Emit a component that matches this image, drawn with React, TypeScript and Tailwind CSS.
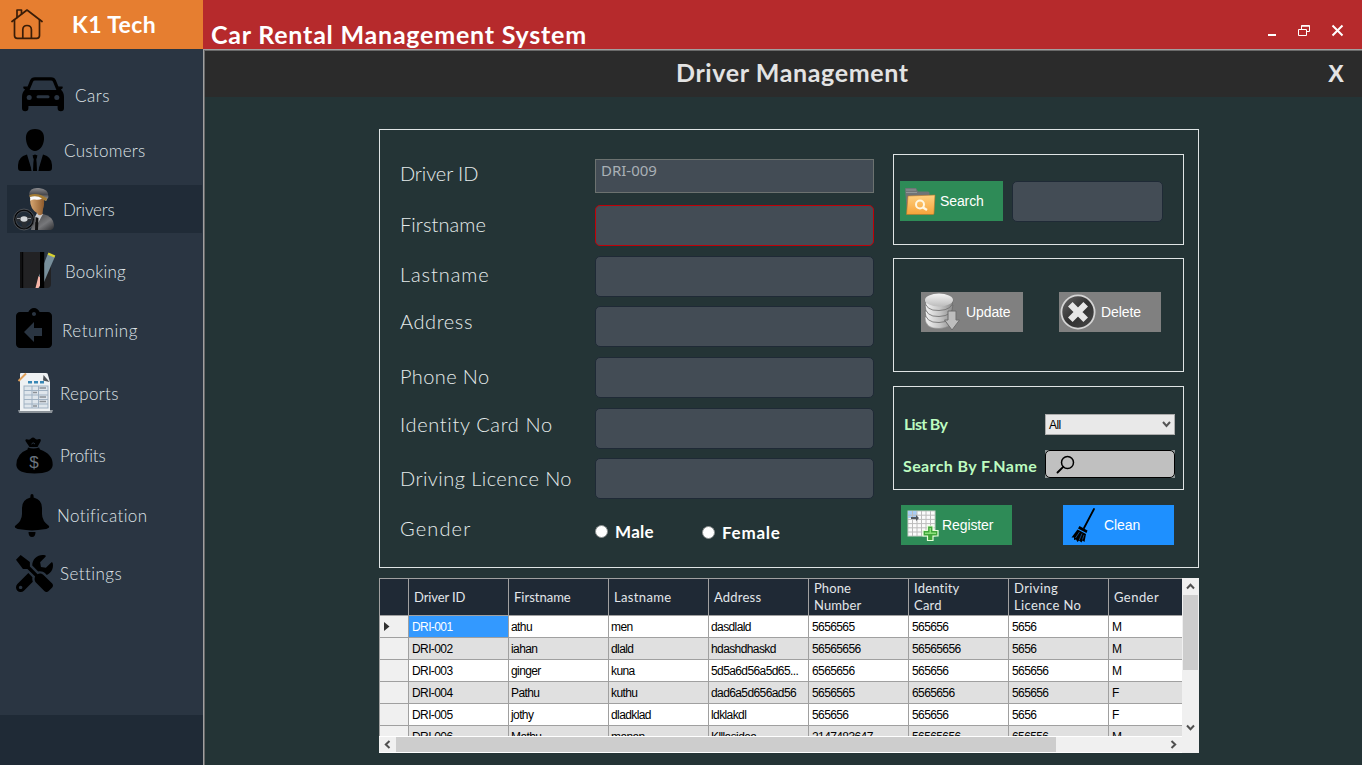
import type { ReactNode } from "react";
import { FaTools } from "react-icons/fa";
import { MdAssignmentReturn } from "react-icons/md";

function HomeIcon() {
  return (
    <svg width="34" height="32" viewBox="0 0 34 32" fill="none" stroke="#3a1d08" strokeWidth="1.7" strokeLinecap="round" strokeLinejoin="round">
      <path d="M2 12.500 L17 1 L32 12.500" />
      <path d="M4.500 10.800 V26.500 Q4.500 29.300 7.300 29.300 H26.700 Q29.500 29.300 29.500 26.500 V10.800" />
      <path d="M12.800 29 V20.500 Q13 16.500 17 16.500 Q21.200 16.500 21.400 20.500 V29" />
      <path d="M7 8.500 V1 H11.500 V5" />
    </svg>
  );
}

function CarIcon() {
  return (
    <svg width="42" height="35" viewBox="0 0 42 35">
      <path d="M5.5 14 L9.5 4.2 Q10.3 1.8 13 1.8 H29 Q31.7 1.8 32.5 4.2 L36.5 14" fill="none" stroke="#000" strokeWidth="3.2" />
      <path d="M1.5 9.5 H6 L5 13 H37 L36 9.5 H40.5 Q41.5 11.5 38.8 12.6 Q42 15.5 42 20 V31 A3.2 3.2 0 0 1 35.6 31 V29 H6.4 V31 A3.2 3.2 0 0 1 0 31 V20 Q0 15.5 3.2 12.6 Q.5 11.5 1.5 9.5 Z" />
      <circle cx="7.2" cy="20.5" r="2.5" fill="#2a3542" />
      <circle cx="34.8" cy="20.5" r="2.5" fill="#2a3542" />
      <rect x="14.5" y="18.3" width="13" height="3" rx="1.5" fill="#2a3542" />
    </svg>
  );
}

function CustomerIcon() {
  return (
    <svg width="34" height="42" viewBox="0 0 34 42">
      <path d="M17 0 C24 0 26.500 4.500 26 10.500 C25.500 17 21.500 22 17 22 C12.500 22 8.500 17 8 10.500 C7.500 4.500 10 0 17 0 Z" />
      <path d="M9 25.500 Q0 28 0 36 V39 Q0 42 3 42 H31 Q34 42 34 39 V36 Q34 28 25 25.500 L20 42 L18.500 30 L19.500 26.500 L17 25.500 L14.500 26.500 L15.500 30 L14 42 Z" />
      <path d="M11.300 25.500 L13.600 42 H15 L15.500 30.500 L13.800 25.500 Z M22.700 25.500 L20.400 42 H19 L18.500 30.500 L20.200 25.500 Z" fill="#2a3542" />
    </svg>
  );
}

function DriverIcon() {
  return (
    <svg width="42" height="44" viewBox="0 0 42 44">
      <defs>
        <linearGradient id="coat" x1="0" y1="0" x2="1" y2="1">
          <stop offset="0" stopColor="#3a3a3c" />
          <stop offset=".6" stopColor="#77787b" />
          <stop offset="1" stopColor="#2c2d30" />
        </linearGradient>
        <linearGradient id="cap" x1="0" y1="0" x2="0" y2="1">
          <stop offset="0" stopColor="#8b8b8e" />
          <stop offset=".5" stopColor="#4a4a4e" />
          <stop offset="1" stopColor="#b5b5b5" />
        </linearGradient>
        <linearGradient id="face" x1="0" y1="0" x2="1" y2="0">
          <stop offset="0" stopColor="#d9a873" />
          <stop offset="1" stopColor="#8d5a2c" />
        </linearGradient>
      </defs>
      <path d="M18 43 L20 32 Q23 28 30 27 Q40 29 41 38 Q41 42 38 43 Z" fill="url(#coat)" />
      <path d="M22 30 L24 26 L30 27 L25 36 L22 35 Z" fill="#c9cacd" />
      <path d="M22.500 30 L25.500 31 L25 43 H22 Z" fill="#111" />
      <path d="M17 12 H31 Q31.500 19 30 22 L29.500 27 Q26 30 24 26 Q17 22 17 12 Z" fill="url(#face)" />
      <path d="M16 7 Q17 0 26 1 Q36 2 35.500 10 L33 14 Q24 8 17 11 Z" fill="url(#cap)" />
      <path d="M16.500 8 Q25 5 34 11.500 L33 14 Q24 8.500 16.700 10 Z" fill="#a37b34" />
      <path d="M17 10 Q24 8 29 11.500 Q26 13.500 22 12.500 Q18 12 17.500 14 Z" fill="#fafafa" />
      <circle cx="11" cy="32.500" r="9.400" fill="none" stroke="#08090b" strokeWidth="2.400" />
      <circle cx="11" cy="32.500" r="10.400" fill="none" stroke="#777b80" strokeWidth=".6" />
      <circle cx="11" cy="32.500" r="8.200" fill="none" stroke="#6a6f75" strokeWidth=".5" />
      <path d="M2.500 30.500 L10 29.500 H19.500 V33 L14 36 L13 41.500 H9.500 L8.500 36 L2.500 33.500 Z" fill="#2a2e33" />
      <ellipse cx="11" cy="32" rx="3.600" ry="2.800" fill="#d3d6d9" />
      <path d="M4 31.500 H7 M15 31.500 H18" stroke="#8b8f94" strokeWidth="1.200" />
    </svg>
  );
}

function BookingIcon() {
  return (
    <svg width="36" height="37" viewBox="0 0 36 37">
      <path d="M0 0 H31 V32 Q31 36 27 36 H0 Z" fill="#222224" />
      <path d="M0 0 H3 V36 H0 Z" fill="#101011" />
      <path d="M2.300 0 H3.200 V36 H2.300 Z" fill="#000" />
      <path d="M24 0 H31 V6 L24 20 Z" fill="#2a3542" />
      <path d="M28 1.500 L35 4.500 L24 30 L19 24 Z" fill="#78909c" />
      <path d="M28.500 .5 L35.300 3.500 L34.300 5.500 L27.700 2.700 Z" fill="#d8d22f" />
      <path d="M18.500 24 L23.500 28 L18.500 36 H15.500 Z" fill="#f6b5a8" />
      <rect x="20" y="0" width="4.200" height="36" fill="#000" />
    </svg>
  );
}

function ReportIcon() {
  return (
    <svg width="37" height="42" viewBox="0 0 37 42">
      <path d="M1 38 H36 L35 41 H2 Z" fill="#8b9298" />
      <path d="M3 2 Q3 1 4 1 H29 Q31 1 31 3 L33 10 V39 H3 Z" fill="#eef1f3" />
      <path d="M26.500 3 L26 8.500 L32.500 10 Z" fill="#4d5257" />
      <path d="M1.500 9 L9 1.500" stroke="#e0a05a" strokeWidth="2" />
      <path d="M11 9 h4 v2.500 h-4z M17 9 h4 v2.500 h-4z M23 9 h4 v2.500 h-4z" fill="#3787b5" />
      <rect x="7" y="14" width="24" height="22" fill="#dfe6ec" stroke="#9fb1c2" strokeWidth="1" />
      <path d="M7 18.500 H31 M7 23 H31 M7 27.500 H31 M7 32 H31 M15 14 V36 M21.500 14 V36" stroke="#9fb1c2" strokeWidth="1" />
      <path d="M22.500 16 H29 M16 20.500 H20 M22.500 25 H29 M22.500 29.500 H29 M16 34 H20" stroke="#8c9196" strokeWidth="1.500" />
    </svg>
  );
}

function MoneyBagIcon() {
  return (
    <svg width="37" height="37" viewBox="0 0 37 37">
      <path d="M9.500 4 Q9 1.500 12 2.500 Q14 3 15 1.500 Q17 -.5 19 1.500 Q20.500 3 23 2 Q25.500 1.500 24.500 4.500 L21.500 10 H13.500 Z" />
      <path d="M12 10.500 Q17.500 12.500 23 10.500 L24 12.500 Q37 17 36.700 28 Q36 36.500 18.500 36.500 Q1 36.500 .3 28 Q.5 16.500 11.500 12.500 Z" />
      <path d="M15.500 7 Q17 4.500 19 7" fill="none" stroke="#2a3542" strokeWidth="1" />
      <text x="18" y="31" textAnchor="middle" fontFamily="Liberation Sans, sans-serif" fontSize="17" fill="#6a737d">$</text>
    </svg>
  );
}

function BellIcon() {
  return (
    <svg width="36" height="43" viewBox="0 0 36 43">
      <path d="M18 0 Q19.600 0 19.600 2 V3.500 Q28 5.500 28 14 V20 Q28 27 35 32 Q36 34.500 30 35.300 Q18 37.500 6 35.300 Q0 34.500 1 32 Q8 27 8 20 V14 Q8 5.500 16.400 3.500 V2 Q16.400 0 18 0 Z" />
      <path d="M14.500 38 H21.500 Q21.500 43 18 43 Q14.500 43 14.500 38 Z" />
    </svg>
  );
}

function FolderIcon() {
  return (
    <svg width="32" height="29" viewBox="0 0 32 29">
      <defs>
        <linearGradient id="folder" x1="0" y1="0" x2="0" y2="1">
          <stop offset="0" stopColor="#ffd07f" />
          <stop offset="1" stopColor="#f6a33a" />
        </linearGradient>
      </defs>
      <path d="M1 2 Q1 1 2 1 H12 L14 4.500 H24 Q25.500 4.500 25.500 6 V26 H3 Z" fill="#6f7476" />
      <path d="M2 3 H12 M2 5.500 H13" stroke="#9aa0a0" strokeWidth=".8" />
      <path d="M4 9 L31 8 L30 26.500 Q30 27.500 29 27.500 H2.500 Z" fill="url(#folder)" stroke="#b9772a" strokeWidth=".6" />
      <circle cx="16" cy="17.500" r="4" fill="none" stroke="#fff6e0" strokeWidth="2" />
      <path d="M19 20.500 L23 23" stroke="#fff6e0" strokeWidth="2.400" />
    </svg>
  );
}

function DatabaseIcon() {
  return (
    <svg width="36" height="38" viewBox="0 0 36 38">
      <defs>
        <linearGradient id="disc" x1="0" y1="0" x2="1" y2="0">
          <stop offset="0" stopColor="#f4f4f4" />
          <stop offset=".55" stopColor="#c4c4c4" />
          <stop offset="1" stopColor="#8b8b8b" />
        </linearGradient>
        <linearGradient id="top" x1="0" y1="0" x2="0" y2="1">
          <stop offset="0" stopColor="#f4f4f4" />
          <stop offset="1" stopColor="#bcbcbc" />
        </linearGradient>
      </defs>
      <path d="M1 24 Q1 36 15 35.500 Q29 35 29 24 Z" fill="url(#disc)" stroke="#8a8a8a" strokeWidth=".6" />
      <path d="M1 18 Q1 30 15 29.500 Q29 29 29 18 Z" fill="url(#disc)" stroke="#6a6a6a" strokeWidth=".8" />
      <path d="M1 12 Q1 24 15 23.500 Q29 23 29 12 Z" fill="url(#disc)" stroke="#6a6a6a" strokeWidth=".8" />
      <path d="M1 7 Q1 18 15 17.500 Q29 17 29 7 Z" fill="url(#disc)" stroke="#6a6a6a" strokeWidth=".8" />
      <ellipse cx="15" cy="7" rx="14" ry="6.500" fill="url(#top)" />
      <path d="M24 18 H32 V27 H35.500 L28 37 L20.500 27 H24 Z" fill="#bdbdbd" stroke="#6d6d6d" strokeWidth="1" />
    </svg>
  );
}

function DeleteIcon() {
  return (
    <svg width="36" height="36" viewBox="0 0 36 36">
      <defs>
        <linearGradient id="dark" x1="0" y1="0" x2="1" y2="1">
          <stop offset="0" stopColor="#6a6a6a" />
          <stop offset=".5" stopColor="#303030" />
          <stop offset="1" stopColor="#4a4a4a" />
        </linearGradient>
      </defs>
      <circle cx="18" cy="18" r="16.600" fill="url(#dark)" stroke="#d4d4d4" strokeWidth="1.800" />
      <path d="M10.300 10.300 L25.700 25.700 M25.700 10.300 L10.300 25.700" stroke="#e6e6e6" strokeWidth="6.500" />
    </svg>
  );
}

function GridPlusIcon() {
  return (
    <svg width="32" height="31" viewBox="0 0 32 31">
      <rect x="1" y="1" width="27" height="25" fill="#fbfbfb" stroke="#c9cfc9" strokeWidth="1" />
      <rect x="1" y="1" width="9" height="7" fill="#a9cdf4" />
      <path d="M1 5.200 H28 M1 9.400 H28 M1 13.600 H28 M1 17.800 H28 M1 22 H28 M5.500 1 V26 M10 1 V26 M14.500 1 V26 M19 1 V26 M23.500 1 V26" stroke="#bcbcbc" strokeWidth="1" />
      <path d="M4 7 H9 V5 L12 8 L9 11 V9 H4 Z" fill="#54595f" />
      <path d="M20.500 16 H26 V20.500 H31 V26 H26 V30.500 H20.500 V26 H16 V20.500 H20.500 Z" fill="#3fa53a" stroke="#e6ffd9" strokeWidth="1.200" />
      <path d="M22.500 18 H24 V22.500 H29 V24 H18 V22.500 H22.500 Z" fill="#8be07a" />
    </svg>
  );
}

function BroomIcon() {
  return (
    <svg width="24" height="35" viewBox="0 0 24 35">
      <path d="M23 1 L13 20" stroke="#000" strokeWidth="1.800" strokeLinecap="round" />
      <path d="M8.500 18 L16.500 22.500 L15.500 25 L7 20.500 Z" />
      <path d="M6.500 21.500 L15 26 L13.500 34 L11.500 32.500 L10.500 34.500 L8 32.500 L6.500 34 L5 31.500 L3 32 L3 29.500 L.5 29.500 Z" />
      <path d="M8.500 24 L4.500 30 M11 25.500 L8.300 32 M13 27 L11.500 31.500" stroke="#1e90ff" strokeWidth=".5" />
    </svg>
  );
}

const navItems: { label: string; icon: ReactNode; row: string; iconBox: string; text: string }[] = [
  { label: "Cars", icon: <CarIcon />, row: "mt-[22px]", iconBox: "ml-[15px] w-[53px] pb-[2px]", text: "tracking-[0.5px]" },
  { label: "Customers", icon: <CustomerIcon />, row: "mt-[7px]", iconBox: "ml-[11px] w-[46px]", text: "tracking-[0.3px]" },
  { label: "Drivers", icon: <DriverIcon />, row: "mt-[11px] bg-[#202b37]", iconBox: "ml-[6px] w-[50px]", text: "tracking-[-0.2px]" },
  { label: "Booking", icon: <BookingIcon />, row: "mt-[14px]", iconBox: "ml-[13px] w-[45px] pb-[2px]", text: "tracking-[0.2px]" },
  { label: "Returning", icon: <MdAssignmentReturn size={48} color="#000" />, row: "mt-[11px]", iconBox: "ml-[3px] w-[52px]", text: "tracking-[0.55px]" },
  { label: "Reports", icon: <ReportIcon />, row: "mt-[15px]", iconBox: "ml-[10px] w-[43px]", text: "tracking-[0.3px]" },
  { label: "Profits", icon: <MoneyBagIcon />, row: "mt-[14px]", iconBox: "ml-[9px] w-[44px]", text: "tracking-[-0.25px]" },
  { label: "Notification", icon: <BellIcon />, row: "mt-[12px]", iconBox: "ml-[7px] w-[43px]", text: "tracking-[0.4px]" },
  { label: "Settings", icon: <FaTools size={37} color="#000" />, row: "mt-[10px]", iconBox: "ml-[9px] w-[44px]", text: "tracking-[0.45px]" },
];

function Sidebar() {
  return (
    <aside className="flex w-[203px] shrink-0 flex-col bg-[#2a3542]">
      <div className="flex h-[49px] items-center bg-[#e67e30]">
        <div className="ml-[10px] w-[62px]"><HomeIcon /></div>
        <span className="text-[23px] font-bold tracking-[0.4px] text-white">K1 Tech</span>
      </div>
      <nav className="flex h-[666px] flex-col">
        {navItems.map((item) => (
          <a key={item.label} className={`ml-[7px] flex h-[48px] w-[195px] shrink-0 items-center ${item.row}`}>
            <span className={`shrink-0 ${item.iconBox}`}>{item.icon}</span>
            <span className={`pt-[2px] text-[17px] font-light whitespace-nowrap text-[#dfe3e7] ${item.text}`}>{item.label}</span>
          </a>
        ))}
      </nav>
      <div className="flex-1 bg-[#1f2a36]" />
    </aside>
  );
}

function TitleBar() {
  return (
    <header className="flex h-[49px] items-start bg-[#b62a2c]">
      <h1 className="mt-[20px] ml-[8px] text-[25px] leading-[28px] font-bold tracking-[0.78px] text-white">Car Rental Management System</h1>
      <svg className="mt-[24px] mr-[18px] ml-auto" width="76" height="14" viewBox="0 0 76 14" fill="none" stroke="#fff">
        <path d="M0 11 H8" strokeWidth="2" />
        <path d="M33.500 5.500 V1.500 H41.500 V7.500 H38.500" />
        <path d="M33.500 2 H41.500" strokeWidth="1.500" />
        <path d="M30.500 5.500 H38.500 V11.500 H30.500 Z" />
        <path d="M64.500 1.500 L74.500 11.500 M74.500 1.500 L64.500 11.500" strokeWidth="2" />
      </svg>
    </header>
  );
}

const fields: { label: string; row: string; labelCls: string; text: string; input: string; value?: string }[] = [
  { label: "Driver ID", value: "DRI-009", row: "h-[34px]", labelCls: "pb-[6px]", text: "tracking-[-0.1px]", input: "border-[#6c7270]" },
  { label: "Firstname", row: "mt-[12px] h-[41px]", labelCls: "pb-[3px]", text: "tracking-[0.1px]", input: "rounded-[5px] border-red-700" },
  { label: "Lastname", row: "mt-[10px] h-[41px]", labelCls: "pb-[5px]", text: "tracking-[0.9px]", input: "rounded-[5px] border-[#1f2a36]" },
  { label: "Address", row: "mt-[9px] h-[41px]", labelCls: "pb-[11px]", text: "tracking-[0.6px]", input: "rounded-[5px] border-[#1f2a36]" },
  { label: "Phone No", row: "mt-[10px] h-[41px]", labelCls: "pb-[3px]", text: "tracking-[0.4px]", input: "rounded-[5px] border-[#1f2a36]" },
  { label: "Identity Card No", row: "mt-[10px] h-[41px]", labelCls: "pb-[9px]", text: "tracking-[0.65px]", input: "rounded-[5px] border-[#1f2a36]" },
  { label: "Driving Licence No", row: "mt-[9px] h-[41px]", labelCls: "pb-[1px]", text: "tracking-[0.45px]", input: "rounded-[5px] border-[#1f2a36]" },
];

function DriverForm() {
  return (
    <div className="mt-[29px] ml-[20px] w-[474px]">
      {fields.map((f) => (
        <label key={f.label} className={`grid grid-cols-[195px_279px] ${f.row}`}>
          <span className={`flex items-center ${f.labelCls}`}>
            <span className={`text-[20px] leading-[26px] font-light whitespace-nowrap text-[#e6ecec] ${f.text}`}>{f.label}</span>
          </span>
          <span className={`flex items-start border border-solid bg-[#434c55] px-[5px] ${f.input}`}>
            {f.value && <span className="font-['Noto_Sans'] text-[15px] leading-[21px] text-[#a9b0b5]">{f.value}</span>}
          </span>
        </label>
      ))}
      <div className="mt-[16px] flex h-[32px] items-center">
        <span className="w-[195px] pb-[6px]">
          <span className="text-[20px] font-light tracking-[1.15px] text-[#e6ecec]">Gender</span>
        </span>
        <span className="h-[13px] w-[13px] rounded-full border border-[#8a8f8f] bg-white" />
        <span className="ml-[7px] w-[87px] pt-[2px]">
          <span className="text-[17px] font-bold tracking-[0.3px] text-white">Male</span>
        </span>
        <span className="mt-[2px] h-[13px] w-[13px] rounded-full border border-[#8a8f8f] bg-white" />
        <span className="mt-[4px] ml-[7px] text-[17px] font-bold tracking-[0.75px] text-white">Female</span>
      </div>
    </div>
  );
}

function ActionButton({ icon, label, cls, iconCls }: { icon: ReactNode; label: string; cls: string; iconCls: string }) {
  return (
    <button className={`flex h-[40px] shrink-0 items-center ${cls}`}>
      <span className={`shrink-0 ${iconCls}`}>{icon}</span>
      <span className="font-['Liberation_Sans'] text-[14px] tracking-[-0.1px] text-white">{label}</span>
    </button>
  );
}

function SidePanels() {
  return (
    <div className="mt-[24px] ml-[19px] w-[291px]">
      <section className="flex h-[91px] border border-[#dfe4e5] pt-[26px] pl-[6px]">
        <ActionButton icon={<FolderIcon />} label="Search" cls="w-[103px] bg-[#2e8b57]" iconCls="ml-[4px] w-[36px]" />
        <div className="ml-[9px] h-[41px] w-[151px] rounded-[5px] border border-[#1f2a36] bg-[#434c55]" />
      </section>
      <section className="mt-[13px] flex h-[114px] gap-[36px] border border-[#dfe4e5] pt-[33px] pl-[27px]">
        <ActionButton icon={<DatabaseIcon />} label="Update" cls="w-[102px] bg-[#808080]" iconCls="ml-[3px] w-[42px]" />
        <ActionButton icon={<DeleteIcon />} label="Delete" cls="w-[102px] bg-[#808080]" iconCls="ml-[1px] w-[41px]" />
      </section>
      <section className="mt-[14px] h-[104px] border border-[#dfe4e5] pl-[9px]">
        <div className="mt-[27px] flex h-[21px] items-center">
          <span className="ml-[1px] w-[141px] pb-[1px]">
            <span className="text-[16px] font-bold tracking-[-0.7px] text-[#bdfcc0]">List By</span>
          </span>
          <div className="flex h-[21px] w-[130px] items-center border border-[#acacac] bg-[#e9e9e9] px-[3px]">
            <span className="font-['Liberation_Sans'] text-[12px] tracking-[-0.6px] text-black">All</span>
            <svg className="ml-auto" width="9" height="7" viewBox="0 0 9 7" fill="none" stroke="#555" strokeWidth="2">
              <path d="M1 1 L4.500 5 L8 1" />
            </svg>
          </div>
        </div>
        <div className="mt-[15px] flex h-[28px] items-center">
          <span className="w-[142px] pt-[4px]">
            <span className="text-[16px] font-bold tracking-[0.4px] text-[#bdfcc0]">Search By F.Name</span>
          </span>
          <div className="h-[28px] w-[130px] bg-[#8d9596]">
            <div className="flex h-[28px] w-[130px] items-center rounded-[5px] border-[1.5px] border-black bg-[#c0c0c0] pl-[10px]">
              <svg width="19" height="19" viewBox="0 0 19 19" fill="none" stroke="#000" strokeWidth="1.500" strokeLinecap="round">
                <circle cx="11.500" cy="7.500" r="6" />
                <path d="M7.200 11.800 L1.500 17.500" strokeWidth="1.900" />
              </svg>
            </div>
          </div>
        </div>
      </section>
      <div className="mt-[15px] ml-[8px] flex gap-[51px]">
        <ActionButton icon={<GridPlusIcon />} label="Register" cls="w-[111px] bg-[#2e8b57]" iconCls="ml-[6px] w-[35px]" />
        <ActionButton icon={<BroomIcon />} label="Clean" cls="w-[111px] bg-[#1e90ff]" iconCls="ml-[8px] w-[33px]" />
      </div>
    </div>
  );
}

const columns = [
  { name: "Driver ID", text: "tracking-[-0.1px]" },
  { name: "Firstname", text: "" },
  { name: "Lastname", text: "tracking-[0.35px]" },
  { name: "Address", text: "tracking-[0.2px]" },
  { name: "Phone Number", text: "tracking-[0.1px]" },
  { name: "Identity Card", text: "tracking-[0.2px]" },
  { name: "Driving Licence No", text: "tracking-[0.4px]" },
  { name: "Gender", text: "tracking-[0.45px]" },
];

const drivers = [
  ["DRI-001", "athu", "men", "dasdlald", "5656565", "565656", "5656", "M"],
  ["DRI-002", "iahan", "dlald", "hdashdhaskd", "56565656", "56565656", "5656", "M"],
  ["DRI-003", "ginger", "kuna", "5d5a6d56a5d65...", "6565656", "565656", "565656", "M"],
  ["DRI-004", "Pathu", "kuthu", "dad6a5d656ad56", "5656565", "6565656", "565656", "F"],
  ["DRI-005", "jothy", "dladklad", "ldklakdl", "565656", "565656", "5656", "F"],
  ["DRI-006", "Mathu", "manan", "Klllasidea", "2147483647", "56565656", "656556", "M"],
];

function Arrow({ d, w, h }: { d: string; w: number; h: number }) {
  return (
    <svg width={w} height={h} viewBox={`0 0 ${w} ${h}`} fill="none" stroke="#505050" strokeWidth="2">
      <path d={d} />
    </svg>
  );
}

function DriverTable() {
  return (
    <div className="mt-[10px] ml-[174px] h-[175px] w-[820px] bg-[#f0f0f0]">
      <div className="flex h-[158px]">
        <div className="h-[158px] w-[803px] overflow-hidden border-t border-l border-[#a0a0a0]">
          <div className="grid h-[37px] w-[829px] grid-cols-[29px_repeat(8,100px)]">
            <div className="border-r border-b border-[#a0a0a0] bg-[#1f2935]" />
            {columns.map((c) => (
              <div key={c.name} className="flex items-center border-r border-b border-[#a0a0a0] bg-[#1f2935] pr-[20px] pl-[5px]">
                <span className={`text-[13px] leading-[17px] text-[#e2e6ea] ${c.text}`}>{c.name}</span>
              </div>
            ))}
          </div>
          {drivers.map((row, r) => (
            <div key={row[0]} className="grid h-[22px] w-[829px] grid-cols-[29px_repeat(8,100px)]">
              <div className="flex items-center border-r border-b border-[#a0a0a0] bg-[#f0f0f0] pl-[4px]">
                {r === 0 && (
                  <svg width="6" height="9" viewBox="0 0 6 9"><path d="M0 0 L5.500 4.500 L0 9 Z" fill="#303030" /></svg>
                )}
              </div>
              {row.map((cell, c) => (
                <div
                  key={c}
                  className={`flex items-center border-r border-b border-[#a0a0a0] whitespace-nowrap ${c > 0 && c < 4 ? "pl-[2px]" : "pl-[3px]"} ${
                    r === 0 && c === 0 ? "bg-[#3399ff] text-white" : r % 2 ? "bg-[#e0e0e0] text-black" : "bg-white text-black"
                  }`}
                >
                  <span className="font-['Liberation_Sans'] text-[12px] tracking-[-0.6px]">{cell}</span>
                </div>
              ))}
            </div>
          ))}
        </div>
        <div className="flex w-[17px] flex-col items-center">
          <div className="flex h-[17px] items-center"><Arrow d="M1 5.500 L4.500 1.800 L8 5.500" w={9} h={7} /></div>
          <div className="h-[75px] w-[15px] bg-[#cdcdcd]" />
          <div className="mt-auto flex h-[17px] items-center"><Arrow d="M1 1.500 L4.500 5.200 L8 1.500" w={9} h={7} /></div>
        </div>
      </div>
      <div className="flex h-[17px] w-[803px] items-center border-t border-b border-white">
        <div className="flex w-[17px] justify-center"><Arrow d="M5.500 1 L1.800 4.500 L5.500 8" w={7} h={9} /></div>
        <div className="h-[15px] w-[660px] bg-[#cdcdcd]" />
        <div className="ml-auto flex w-[17px] justify-center"><Arrow d="M1.500 1 L5.200 4.500 L1.500 8" w={7} h={9} /></div>
      </div>
    </div>
  );
}

export default function App() {
  return (
    <div className="flex h-[765px] w-[1362px] overflow-hidden bg-[#243436] font-[Lato,sans-serif]">
      <Sidebar />
      <main className="flex min-w-0 flex-1 flex-col">
        <TitleBar />
        <div className="flex-1 border-t border-l border-[#a0a0a0]">
          <div className="h-full border-t border-l border-[#696969]">
            <div className="flex h-[46px] items-center bg-[#2b2b2b]">
              <h2 className="ml-[471px] pb-[4px] text-[25px] leading-[30px] font-bold tracking-[0.62px] text-[#e3e3e3]">Driver Management</h2>
              <button className="mr-[18px] ml-auto font-['Liberation_Sans'] text-[24px] font-bold text-[#e3e3e3]">X</button>
            </div>
            <div className="mt-[32px] ml-[174px] flex h-[439px] w-[820px] border border-[#dfe4e5]">
              <DriverForm />
              <SidePanels />
            </div>
            <DriverTable />
          </div>
        </div>
      </main>
    </div>
  );
}
